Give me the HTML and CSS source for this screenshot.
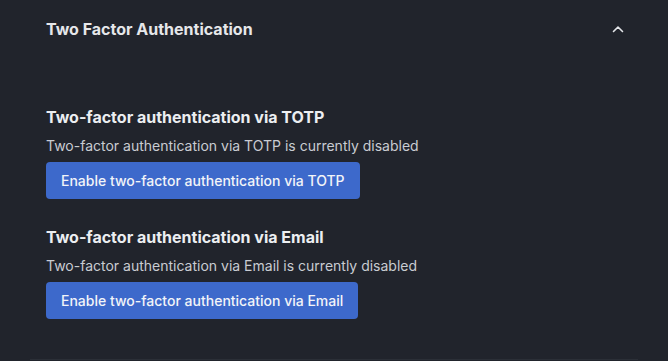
FILE: index.html
```html
<!DOCTYPE html>
<html lang="en">
<head>
    <meta charset="UTF-8">
    <meta name="viewport" content="width=device-width, initial-scale=1.0">
    <title>Two Factor Authentication</title>
    <link rel="stylesheet" href="styles.css">
</head>
<body>
    <div class="panel">
        <div class="panel-header">
            <span class="panel-title">Two Factor Authentication</span>
            <svg class="chevron" width="12" height="8" viewBox="0 0 12 8" aria-hidden="true">
                <path d="M1.5 6.5 L6 2 L10.5 6.5" fill="none" stroke="#e4e6ea" stroke-width="1.6" stroke-linecap="round" stroke-linejoin="round"/>
            </svg>
        </div>

        <div class="panel-body">
            <!-- TOTP -->
            <div class="method">
                <h3 class="method-title">Two-factor authentication via TOTP</h3>
                <p class="method-status">Two-factor authentication via TOTP is currently disabled</p>
                <button class="btn-primary">Enable two-factor authentication via TOTP</button>
            </div>

            <!-- Email -->
            <div class="method">
                <h3 class="method-title">Two-factor authentication via Email</h3>
                <p class="method-status">Two-factor authentication via Email is currently disabled</p>
                <button class="btn-primary">Enable two-factor authentication via Email</button>
            </div>
        </div>
    </div>
</body>
</html>
```

FILE: styles.css
```css
/* General Styling */
body {
    margin: 0;
    background: #21242c;
    font-family: Inter, 'Noto Sans', sans-serif;
    color: #e4e6ea;
}

.panel {
    margin: 0 30px;
    border-bottom: 1px solid #2b2f37;
}

.panel-header {
    display: flex;
    align-items: center;
    justify-content: space-between;
    height: 58px;
    padding: 0 14px 0 16px;
}

.panel-title {
    font-size: 16px;
    font-weight: 700;
    color: #e6e7ea;
}

.chevron {
    display: block;
}

.panel-body {
    display: flex;
    flex-direction: column;
    gap: 26px;
    padding: 47px 16px 40px;
}

.method {
    display: flex;
    flex-direction: column;
    align-items: flex-start;
}

.method-title {
    margin: 0;
    font-size: 16px;
    line-height: 24px;
    font-weight: 700;
    color: #eceef1;
}

.method-status {
    margin: 7px 0 6px;
    font-size: 14px;
    line-height: 20px;
    color: #c9ccd2;
}

.btn-primary {
    height: 37px;
    padding: 0 15px;
    border: none;
    border-radius: 4px;
    background: #3d69cb;
    color: #f2f4f8;
    font-family: inherit;
    font-size: 14px;
    font-weight: 500;
    cursor: pointer;
}
```
